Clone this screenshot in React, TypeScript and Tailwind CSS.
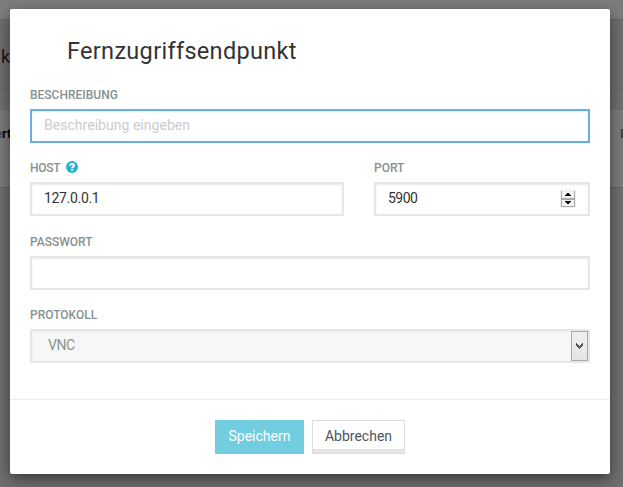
import React from "react";

const field =
  "h-[34px] w-full border-2 px-3 pb-[2px] text-[14px] outline-none shadow-[inset_0_1px_2px_rgba(0,0,0,0.09)]";

function Label({ children }: { children: React.ReactNode }) {
  return (
    <div className="mb-[6px] flex h-4 items-center text-[12px] leading-4 font-medium text-[#879191]">
      {children}
    </div>
  );
}

function PageBehind() {
  return (
    <div className="absolute inset-0 flex flex-col bg-[#707070] text-black">
      <div className="h-5 shrink-0 border-b border-[#666] bg-[#7d7d7d]" />
      <div className="flex h-[70px] shrink-0 items-center border-b border-[#676767] bg-[#707070] pt-[3px]">
        <span className="ml-px text-[18px] text-[#171717]">k</span>
      </div>
      <div className="h-5 shrink-0 bg-[#707070]" />
      <div className="flex h-[78px] shrink-0 justify-between border-b border-[#626262] bg-[#7c7c7c] pt-[16px] text-[13px] leading-4 font-bold">
        <span className="-ml-[5px]">
          <span className="text-[#24506a]">e</span>rt
        </span>
        <span className="w-[3px] text-[#3c4247]">B</span>
      </div>
    </div>
  );
}

export default function App() {
  return (
    <div className="relative h-[487px] w-[623px] overflow-hidden font-['Roboto','Liberation_Sans',sans-serif]">
      <PageBehind />
      <div className="relative mt-[9px] ml-[10px] flex h-[465px] w-[600px] flex-col rounded-[2px] bg-white shadow-[0_5px_15px_rgba(0,0,0,0.5)]">
        <h1 className="mt-[27px] ml-[57px] h-[30px] text-[23.5px] leading-[30px] tracking-[0.31px] whitespace-nowrap text-[#333]">
          Fernzugriffsendpunkt
        </h1>
        <form className="mt-[21px] flex flex-col px-5" onSubmit={(e) => e.preventDefault()}>
          <div className="mb-[17px]">
            <Label>
              <span>BESCHREIBUNG</span>
            </Label>
            <input
              className={`${field} block border-[#66afe9] placeholder:tracking-[0.03px] placeholder:text-[#ccc]`}
              placeholder="Beschreibung eingeben"
            />
          </div>
          <div className="mb-[18px] flex gap-[30px]">
            <div className="w-[314px]">
              <Label>
                <span className="w-[30px] tracking-[-0.3px]">HOST</span>
                <svg className="mb-[2px] ml-[6px] h-3 w-3" viewBox="0 0 12 12">
                  <circle cx="6" cy="6" r="6" fill="#26b3d1" />
                  <path d="M3.9 4.6C4.1 3.4 4.9 2.9 6 2.9c1.2 0 2 .6 2 1.6C8 5.7 6.2 5.6 6.2 7.2" fill="none" stroke="#fff" strokeWidth="1.9" />
                  <path d="M5.2 8h2v1.7h-2z" fill="#fff" />
                </svg>
              </Label>
              <input
                className={`${field} block border-[#e5e6e6] tracking-[-0.33px] text-[#333]`}
                defaultValue="127.0.0.1"
              />
            </div>
            <div className="w-[216px]">
              <Label>
                <span>PORT</span>
              </Label>
              <div className={`${field} flex items-center justify-between border-[#e5e6e6] text-[#333]`}>
                <span className="tracking-[-0.5px]">5900</span>
                <svg className="mt-[2px] h-[18px] w-4" viewBox="0 0 16 18" shapeRendering="crispEdges">
                  <path d="M0 0h16v18H0z" fill="#f0f0f0" />
                  <path d="M1 1h1v16H1zM14 1h1v16h-1zM1 8h14v2H1zM1 16h14v1H1z" fill="#a8a8a8" />
                  <path d="M7 3h2v1h1v1h1v1H5V5h1V4h1zM5 11h6v1h-1v1H9v1H7v-1H6v-1H5z" fill="#000" />
                </svg>
              </div>
            </div>
          </div>
          <div className="mb-[17px]">
            <Label>
              <span>PASSWORT</span>
            </Label>
            <input type="password" className={`${field} block border-[#e5e6e6]`} />
          </div>
          <div>
            <Label>
              <span>PROTOKOLL</span>
            </Label>
            <div className="flex h-[34px] items-center justify-between border-2 border-[#e5e6e6] bg-[#f7f7f7] pl-4 text-[14px] text-[#879191] shadow-[inset_0_1px_2px_rgba(0,0,0,0.06)]">
              <span className="pb-[2px] tracking-[-0.4px]">VNC</span>
              <span className="flex h-[30px] w-[17px] items-center justify-center border border-[#a8a8a8] bg-linear-to-b from-[#f0f0f0] to-[#e4e4e4]">
                <svg className="h-[6px] w-[7px]" viewBox="0 0 7 6" shapeRendering="crispEdges">
                  <path d="M0 0h1v1h1v1h1v1h1V2h1V1h1V0h1v3H6v1H5v1H4v1H3V5H2V4H1V3H0z" fill="#555" />
                </svg>
              </span>
            </div>
          </div>
        </form>
        <div className="mt-auto flex h-[75px] justify-center gap-2 border-t border-[#eee] pt-5 text-[14px]">
          <button className="h-[34px] w-[89px] bg-[#73cde0] pb-px text-white">Speichern</button>
          <button className="h-[34px] w-[93px] border border-[#dcdfdf] bg-white pb-px text-[#4c5659] shadow-[inset_0_-4px_0_#e5e5e5]">
            Abbrechen
          </button>
        </div>
      </div>
    </div>
  );
}
